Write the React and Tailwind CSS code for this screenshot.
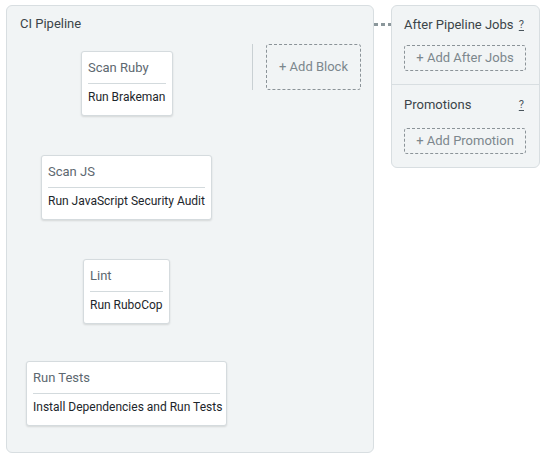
import React from "react";

const font = { fontFamily: "Roboto, 'Noto Sans', sans-serif" };

function Block({ title, job, className }) {
  return (
    <div
      className={
        "bg-white border border-[#d5dbde] rounded-[3px] shadow-[0_1px_2px_rgba(0,0,0,0.12)] px-[6px] pt-[7px] pb-[10px] " +
        className
      }
    >
      <div className="text-[13px] leading-[18px] text-[#5d6870] pb-[6px] border-b border-[#d3dadd] whitespace-nowrap">
        {title}
      </div>
      <div className="text-[12px] leading-[16px] text-[#1d262b] pt-[5px] whitespace-nowrap">
        {job}
      </div>
    </div>
  );
}

function Help() {
  return (
    <span className="text-[11px] leading-[14px] text-[#4a555c] underline underline-offset-2">?</span>
  );
}

function Dashed({ children, className }) {
  return (
    <div
      className={
        "border border-dashed border-[#8b9398] rounded-[3px] flex items-center justify-center text-[13px] text-[#7c878d] " +
        className
      }
    >
      {children}
    </div>
  );
}

export default function App() {
  return (
    <div className="w-[544px] h-[462px] bg-white flex items-start pt-[5px] pl-[6px]" style={font}>
      <div className="w-[368px] h-[448px] bg-[#f1f4f5] border border-[#d8dee1] rounded-[6px] px-[13px] pt-[9px] flex flex-col">
        <div className="text-[13px] leading-[18px] text-[#3b4449]">CI Pipeline</div>
        <div className="flex items-start mt-[11px]">
          <div className="flex-1 flex flex-col items-start">
            <Block title="Scan Ruby" job="Run Brakeman" className="w-[92px] ml-[61px] mt-[7px]" />
            <Block title="Scan JS" job="Run JavaScript Security Audit" className="w-[171px] ml-[21px] mt-[39px]" />
            <Block title="Lint" job="Run RuboCop" className="w-[87px] ml-[63px] mt-[39px]" />
            <Block title="Run Tests" job="Install Dependencies and Run Tests" className="w-[201px] ml-[6px] mt-[37px]" />
          </div>
          <div className="w-px h-[46px] bg-[#c9d0d3] mr-[13px]" />
          <Dashed className="w-[95px] h-[46px] mr-[-1px]">+ Add Block</Dashed>
        </div>
      </div>
      <div className="w-[17px] flex items-center gap-[3px] pt-[18px] pl-[0px]">
        <div className="w-[4px] h-[3px] bg-[#8b979b]" />
        <div className="w-[4px] h-[3px] bg-[#8b979b]" />
        <div className="w-[3px] h-[3px] bg-[#8b979b]" />
      </div>
      <div className="w-[149px] bg-[#f1f4f5] border border-[#d8dee1] rounded-[6px] flex flex-col">
        <div className="px-[12px] pt-[10px] pb-[13px] border-b border-[#d8dee1]">
          <div className="flex justify-between items-center text-[13px] leading-[18px] text-[#3b4449] pr-[3px]">
            <span>After Pipeline Jobs</span>
            <Help />
          </div>
          <Dashed className="h-[26px] mt-[11px] mr-[1px]">+ Add After Jobs</Dashed>
        </div>
        <div className="px-[12px] pt-[11px] pb-[13px]">
          <div className="flex justify-between items-center text-[13px] leading-[18px] text-[#3b4449] pr-[3px]">
            <span>Promotions</span>
            <Help />
          </div>
          <Dashed className="h-[26px] mt-[14px] mr-[1px]">+ Add Promotion</Dashed>
        </div>
      </div>
    </div>
  );
}
